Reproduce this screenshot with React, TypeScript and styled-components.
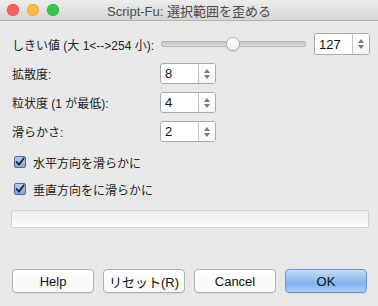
import React from "react";
import styled, { createGlobalStyle } from "styled-components";

const Global = createGlobalStyle`
  html, body { margin: 0; padding: 0; background: #e8e8e8; }
  body { font-family: "Liberation Sans", "Noto Sans CJK JP", sans-serif; font-size: 13px; color: #222; }
`;

const Window = styled.div`
  width: 378px;
  height: 306px;
  display: flex;
  flex-direction: column;
  background: #e8e8e8;
  overflow: hidden;
`;

const TitleBar = styled.div`
  height: 20px;
  display: grid;
  grid-template-columns: 1fr auto 1fr;
  align-items: center;
  background: linear-gradient(#ececec, #d6d6d6);
  border-bottom: 1px solid #b3b3b3;
`;

const Lights = styled.div`
  display: flex;
  gap: 8px;
  padding-left: 7px;
`;

const Light = styled.span<{ $c: string; $b: string }>`
  width: 12px;
  height: 12px;
  border-radius: 50%;
  background: ${(p) => p.$c};
  box-shadow: inset 0 0 0 0.5px ${(p) => p.$b};
`;

const Title = styled.div`
  font-size: 13px;
  color: #4a4a4a;
  white-space: nowrap;
`;

const Body = styled.div`
  flex: 1;
  display: flex;
  flex-direction: column;
  padding: 12px 10px 0 12px;
`;

const Form = styled.div`
  display: grid;
  grid-template-columns: 148px 1fr;
  row-gap: 8px;
  align-items: center;
`;

const Label = styled.div`
  white-space: nowrap;
  font-size: 12px;
`;

const SliderCell = styled.div`
  display: flex;
  align-items: center;
  gap: 8px;
  padding-left: 1px;
`;

const Track = styled.div`
  position: relative;
  width: 143px;
  height: 4px;
  border-radius: 2px;
  background: linear-gradient(#c4c4c4, #dedede);
  border: 1px solid #b8b8b8;
`;

const Thumb = styled.div`
  position: absolute;
  top: 50%;
  width: 14px;
  height: 14px;
  margin: -7px 0 0 -8px;
  border-radius: 50%;
  background: linear-gradient(#ffffff, #f0f0f0);
  border: 1px solid #b0b0b0;
  box-sizing: border-box;
  box-shadow: 0 1px 1px rgba(0, 0, 0, 0.15);
`;

const Spin = styled.div<{ $w: number; $h: number }>`
  display: flex;
  width: ${(p) => p.$w}px;
  height: ${(p) => p.$h}px;
  box-sizing: border-box;
  border: 1px solid #ababab;
  border-radius: 3px;
  background: #fff;
  overflow: hidden;
`;

const SpinText = styled.div`
  flex: 1;
  display: flex;
  align-items: center;
  padding-left: 4px;
  font-size: 13px;
  color: #111;
`;

const Stepper = styled.div`
  width: 16px;
  display: flex;
  flex-direction: column;
  align-items: center;
  justify-content: center;
  gap: 2px;
  border-left: 1px solid #c4c4c4;
  background: linear-gradient(#ffffff, #f4f4f4);
`;

const Arrow = styled.span<{ $down?: boolean }>`
  width: 0;
  height: 0;
  border-left: 3px solid transparent;
  border-right: 3px solid transparent;
  ${(p) =>
    p.$down
      ? "border-top: 4px solid #7a7a7a;"
      : "border-bottom: 4px solid #7a7a7a;"}
`;

const Checks = styled.div`
  display: flex;
  flex-direction: column;
  gap: 11px;
  margin-top: 12px;
  padding-left: 2px;
`;

const CheckRow = styled.div`
  display: flex;
  align-items: center;
  gap: 7px;
  height: 16px;
  font-size: 12px;
`;

const Progress = styled.div`
  margin-top: 13px;
  margin-left: -1px;
  width: 358px;
  height: 18px;
  box-sizing: border-box;
  border: 1px solid #d2d2d2;
  border-radius: 2px;
  background: linear-gradient(#ececec, #fbfbfb);
`;

const Buttons = styled.div`
  margin-top: 41px;
  display: flex;
  gap: 9px;
`;

const Button = styled.div<{ $primary?: boolean }>`
  width: 82px;
  height: 24px;
  box-sizing: border-box;
  display: flex;
  align-items: center;
  justify-content: center;
  border-radius: 4px;
  font-size: 13px;
  color: #111;
  border: 1px solid ${(p) => (p.$primary ? "#6d98cf" : "#b2b2b2")};
  background: ${(p) =>
    p.$primary
      ? "linear-gradient(#c6dcf6, #8cbbef 50%, #7fb2ec 60%, #a9cdf3)"
      : "linear-gradient(#ffffff, #f6f6f6)"};
  box-shadow: 0 1px 0 rgba(0, 0, 0, 0.06);
`;

const SpinBox = ({ value, w, h }: { value: string; w: number; h: number }) => (
  <Spin $w={w} $h={h}>
    <SpinText>{value}</SpinText>
    <Stepper>
      <Arrow />
      <Arrow $down />
    </Stepper>
  </Spin>
);

const CheckIcon = () => (
  <svg width="12" height="12" viewBox="0 0 12 12">
    <defs>
      <linearGradient id="cb" x1="0" y1="0" x2="0" y2="1">
        <stop offset="0" stopColor="#b7cfe9" />
        <stop offset="1" stopColor="#7fa6d2" />
      </linearGradient>
    </defs>
    <rect x="0.5" y="0.5" width="11" height="11" rx="1.5" fill="url(#cb)" stroke="#4d6e96" />
    <path d="M2.6 6 L5 8.6 L9.8 2.2" fill="none" stroke="#1b2633" strokeWidth="1.8" strokeLinecap="round" strokeLinejoin="round" />
  </svg>
);

export default function App() {
  return (
    <>
      <Global />
      <Window>
        <TitleBar>
          <Lights>
            <Light $c="#fc605c" $b="#de4a46" />
            <Light $c="#fdbc40" $b="#dea033" />
            <Light $c="#34c84a" $b="#27aa35" />
          </Lights>
          <Title>Script-Fu: 選択範囲を歪める</Title>
          <div />
        </TitleBar>
        <Body>
          <Form>
            <Label>しきい値 (大 1&lt;--&gt;254 小):</Label>
            <SliderCell>
              <Track>
                <Thumb style={{ left: `${(127 / 254) * 100}%` }} />
              </Track>
              <SpinBox value="127" w={56} h={22} />
            </SliderCell>
            <Label>拡散度:</Label>
            <SpinBox value="8" w={56} h={21} />
            <Label>粒状度 (1 が最低):</Label>
            <SpinBox value="4" w={56} h={21} />
            <Label>滑らかさ:</Label>
            <SpinBox value="2" w={56} h={21} />
          </Form>
          <Checks>
            <CheckRow>
              <CheckIcon />
              <span>水平方向を滑らかに</span>
            </CheckRow>
            <CheckRow>
              <CheckIcon />
              <span>垂直方向をに滑らかに</span>
            </CheckRow>
          </Checks>
          <Progress />
          <Buttons>
            <Button>Help</Button>
            <Button>リセット(R)</Button>
            <Button>Cancel</Button>
            <Button $primary>OK</Button>
          </Buttons>
        </Body>
      </Window>
    </>
  );
}
